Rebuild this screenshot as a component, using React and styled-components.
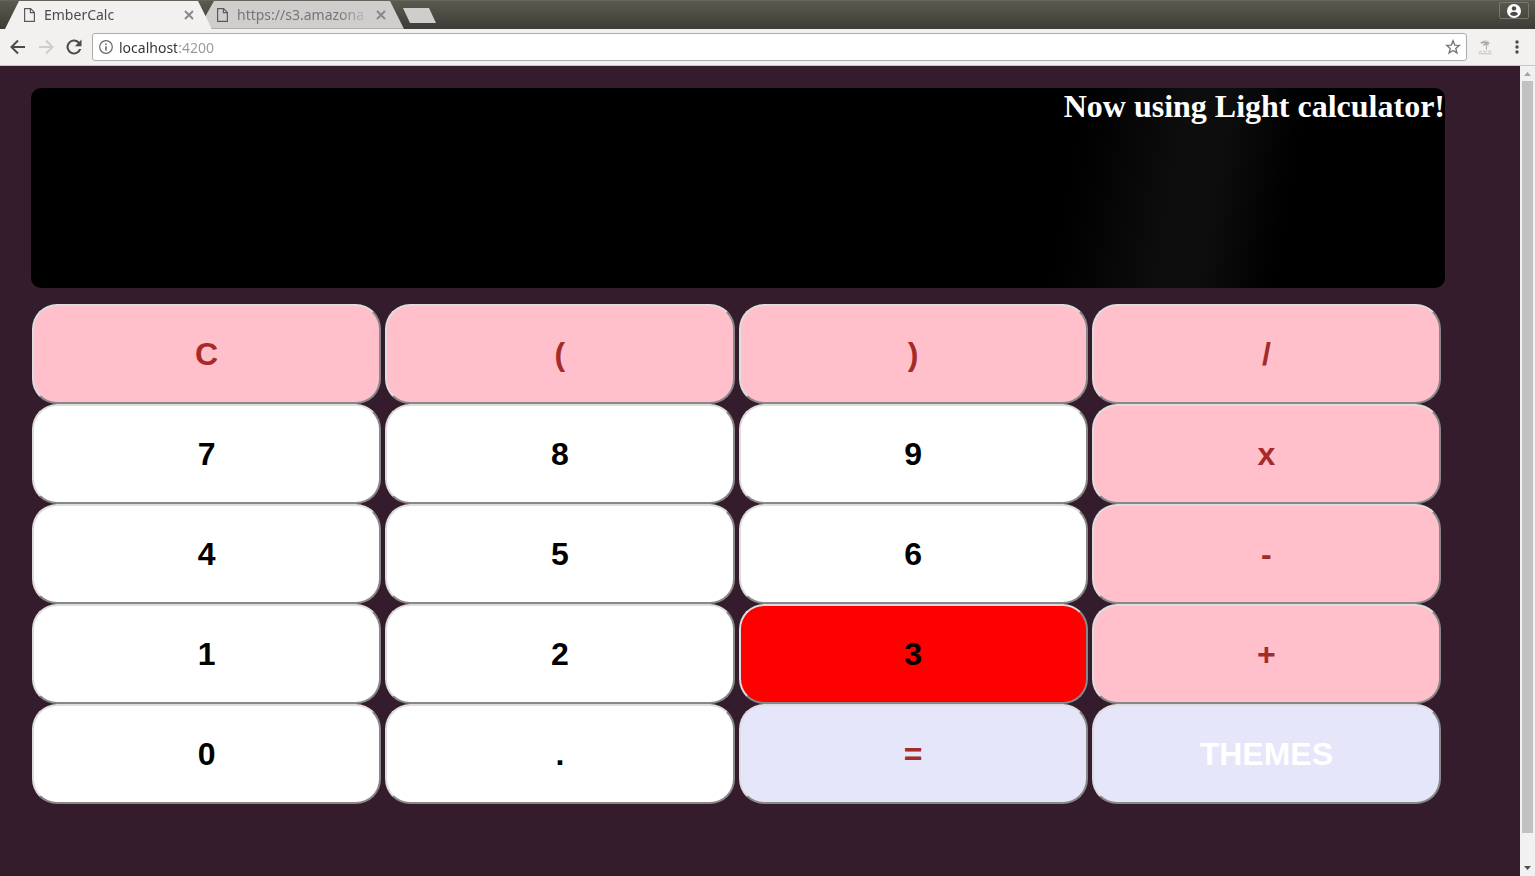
import React from "react";
import styled, { createGlobalStyle } from "styled-components";

const GlobalStyle = createGlobalStyle`
  * { box-sizing: border-box; }
  body { margin: 0; background: #341c2c; }
`;

const Browser = styled.div`
  display: flex;
  flex-direction: column;
  min-height: 100vh;
  font-family: "Noto Sans", "Open Sans", sans-serif;
`;

const IconButton = styled.button`
  display: flex;
  align-items: center;
  justify-content: center;
  flex: none;
  width: ${(p) => p.$size}px;
  height: ${(p) => p.$size}px;
  padding: 0;
  border: 0;
  background: none;
  color: ${(p) => p.$color || "#4a4a4a"};
`;

/* Tab strip */
const TabStrip = styled.header`
  display: flex;
  align-items: flex-start;
  height: 29px;
  padding: 0 6px 0 5px;
  background: linear-gradient(#5c5a4f, #3c3b36);
  border-top: 1px solid #66645a;
`;

const Tabs = styled.nav`
  display: flex;
`;

const Tab = styled.div`
  position: relative;
  z-index: ${(p) => (p.$active ? 2 : 1)};
  display: flex;
  align-items: center;
  width: ${(p) => (p.$active ? 207 : 204)}px;
  height: 28px;
  margin-left: ${(p) => (p.$active ? 0 : -12)}px;
  padding: 0 13px 0 ${(p) => (p.$active ? 18 : 16)}px;
  background: ${(p) => (p.$active ? "#f2f1f0" : "linear-gradient(#d0cecd 27px, #b0aeac 27px)")};
  clip-path: polygon(14px 0, calc(100% - 14px) 0, 100% 100%, ${(p) => (p.$active ? "0 100%" : "12px 100%, 5px 16px")});
`;

const TabButton = styled.button`
  display: flex;
  align-items: center;
  flex: 1;
  min-width: 0;
  gap: 8px;
  padding: 0;
  border: 0;
  background: none;
  color: ${(p) => (p.$active ? "#4c4c4c" : "#777573")};
  font: 14px/20px "Noto Sans", "Open Sans", sans-serif;
  text-align: left;
`;

const TabTitle = styled.span`
  flex: 1;
  white-space: nowrap;
  mask-image: linear-gradient(to right, #000 calc(100% - 32px), transparent);
`;

const NewTab = styled.button`
  width: 33px;
  height: 15px;
  margin: 7px auto 0 -1px;
  padding: 0;
  border: 0;
  background: #d0cecd;
  clip-path: polygon(0 0, 26px 0, 100% 100%, 7px 100%);
`;

const ProfileButton = styled.button`
  display: flex;
  align-items: center;
  justify-content: center;
  width: 30px;
  height: 17px;
  margin-top: 1px;
  padding: 0;
  border: 1px solid #77766f;
  border-radius: 2px;
  background: none;
`;

/* Address bar */
const Toolbar = styled.div`
  display: flex;
  align-items: center;
  height: 37px;
  padding: 0 8px 0 4px;
  background: #f2f1f0;
  border-bottom: 1px solid #c8c6c4;
`;

const AddressBox = styled.div`
  display: flex;
  align-items: center;
  flex: 1;
  min-width: 0;
  height: 28px;
  margin: 0 8px 0 4px;
  padding: 0 3px 0 6px;
  background: #fff;
  border: 1px solid #aeacaa;
  border-radius: 3px;
`;

const AddressInput = styled.input`
  flex: 1;
  min-width: 0;
  height: 22px;
  margin-left: 6px;
  padding: 0;
  border: 0;
  outline: 0;
  font: 14px/20px "Noto Sans", "Open Sans", sans-serif;
  color: #333;
  -webkit-text-fill-color: transparent;
  background: linear-gradient(to right, #333 58px, #999 58px);
  background-clip: text;
`;

const ToolbarActions = styled.div`
  display: flex;
  gap: 12px;
`;

/* Page */
const Viewport = styled.div`
  display: flex;
  flex: 1;
`;

const Calculator = styled.main`
  flex: 1;
  min-width: 0;
  padding: 22px 75px 0 31px;
  background: #341c2c;
`;

const Display = styled.section`
  height: 200px;
  border-radius: 10px;
  background: linear-gradient(100deg, #000 73%, #0d0d0d 80%, #0d0d0d 83%, #000 88%);
  text-align: right;
`;

const Message = styled.h1`
  margin: 0;
  color: #fff;
  font: bold 32px/37px "Liberation Serif", serif;
`;

const Keypad = styled.section`
  display: grid;
  grid-template-columns: repeat(4, 1fr);
  column-gap: 4px;
  padding: 16px 4px 0 1px;
`;

const tones = {
  digit: ["#fff", "#000"],
  operator: ["#ffc0cb", "#a52a2a"],
  pressed: ["#f00", "#000"],
  equals: ["#e6e6fa", "#a52a2a"],
  themes: ["#e6e6fa", "#fff"],
};

const Key = styled.button`
  height: 100px;
  padding: 0;
  border: 2px solid;
  border-color: #ddd #888 #888 #ddd;
  border-radius: 25px;
  background: ${(p) => tones[p.$tone][0]};
  color: ${(p) => tones[p.$tone][1]};
  font: bold 32px/36px "Liberation Sans", sans-serif;
`;

const Scrollbar = styled.div`
  display: flex;
  flex-direction: column;
  width: 15px;
  background: #f1f1f1;
`;

const Track = styled.div`
  flex: 1;
  display: flex;
  flex-direction: column;
  padding: 0 2px;

  &::before { content: ""; flex: 752; background: #c1c1c1; }
  &::after { content: ""; flex: 28; }
`;

const PageIcon = () => (
  <svg width="13" height="16" viewBox="0 0 13 16" fill="none" stroke="#5a5a5a" strokeWidth="1.2">
    <path d="M1.6 1.6h6l3.8 3.8v9H1.6zM7.4 1.6v4h4" />
  </svg>
);

const CloseIcon = () => (
  <svg width="10" height="10" viewBox="0 0 10 10" stroke="currentColor" strokeWidth="1.9">
    <path d="M1 1l8 8M9 1l-8 8" />
  </svg>
);

const LineArrow = ({ d }) => (
  <svg width="20" height="20" viewBox="0 0 20 20" fill="none" stroke="currentColor" strokeWidth="2">
    <path d={d} />
  </svg>
);

const ReloadIcon = () => (
  <svg width="20" height="20" viewBox="0 0 24 24" fill="currentColor">
    <path d="M18.4 5.6A9 9 0 1 0 20.7 14.500H18A6.500 6.500 0 1 1 16.600 7.400L13 11h8V3z" />
  </svg>
);

const StarIcon = () => (
  <svg width="16" height="16" viewBox="0 0 16 16" fill="none" stroke="currentColor" strokeWidth="1.4">
    <path d="M8 1.8l1.7 4.300 4.600.3-3.500 3 1.100 4.500L8 11.500l-3.900 2.400 1.100-4.500-3.500-3 4.600-.3z" />
  </svg>
);

const InfoIcon = () => (
  <svg width="14" height="14" viewBox="0 0 14 14" fill="none" stroke="#666">
    <circle cx="7" cy="7" r="6.3" strokeWidth="1.2" />
    <path d="M7 6.200v4.300M7 3.400v1.500" strokeWidth="1.600" />
  </svg>
);

const ProfileIcon = () => (
  <svg width="14" height="14" viewBox="0 0 14 14">
    <circle cx="7" cy="7" r="7" fill="#fff" />
    <circle cx="7" cy="4.4" r="2.2" fill="#4b4a43" />
    <path d="M2.8 9.9Q4.2 7.8 7 7.8t4.2 2.1Q9.6 12 7 12T2.8 9.9z" fill="#4b4a43" />
  </svg>
);

const ExtensionIcon = () => (
  <svg width="16" height="16" viewBox="0 0 16 16" fill="none">
    <path d="M2.5 4.500Q5 .8 8.500 1.200t5 3.600l-2.500-.6-2 1.300-2.500-1.300z" fill="#cfcfcf" />
    <path d="M4 4l4-.8L12 4.500M6 6.500l3-2 2.500 2" stroke="#969696" />
    <path d="M8.500 4.500q1.500 3 .8 6" stroke="#b0b0b0" strokeWidth="1.300" />
    <path d="M1.500 13.500l2.500-1.500 1 1.500M6.500 11.500l1.500 2 2-2M11.500 13.500l1-2 2 2M2 14.800h12.500" stroke="#c4c4c4" />
  </svg>
);

const MenuIcon = () => (
  <svg width="20" height="20" viewBox="0 0 20 20" fill="currentColor">
    <circle cx="10" cy="5" r="1.7" />
    <circle cx="10" cy="10" r="1.7" />
    <circle cx="10" cy="15" r="1.7" />
  </svg>
);

const ScrollArrow = ({ d, color }) => (
  <svg width="15" height="15" viewBox="0 0 15 15" fill={color}><path d={d} /></svg>
);

const keys = [
  ["C", "operator"], ["(", "operator"], [")", "operator"], ["/", "operator"],
  ["7", "digit"], ["8", "digit"], ["9", "digit"], ["x", "operator"],
  ["4", "digit"], ["5", "digit"], ["6", "digit"], ["-", "operator"],
  ["1", "digit"], ["2", "digit"], ["3", "pressed"], ["+", "operator"],
  ["0", "digit"], [".", "digit"], ["=", "equals"], ["THEMES", "themes"],
];

const tabs = [
  { title: "EmberCalc", active: true },
  { title: "https://s3.amazona", active: false },
];

export default function App() {
  return (
    <Browser>
      <GlobalStyle />
      <TabStrip>
        <Tabs aria-label="Tabs">
          {tabs.map(({ title, active }) => (
            <Tab key={title} $active={active}>
              <TabButton $active={active}>
                <PageIcon />
                <TabTitle>{title}</TabTitle>
              </TabButton>
              <IconButton $size={20} $color="#8a8886" aria-label={`Close ${title}`}><CloseIcon /></IconButton>
            </Tab>
          ))}
        </Tabs>
        <NewTab aria-label="New tab" />
        <ProfileButton aria-label="Profile"><ProfileIcon /></ProfileButton>
      </TabStrip>
      <Toolbar>
        <IconButton $size={28} aria-label="Back">
          <LineArrow d="M17 10H4M10 3.500L3.500 10l6.500 6.500" />
        </IconButton>
        <IconButton $size={28} $color="#cfcdcb" aria-label="Forward">
          <LineArrow d="M3 10h13M10 3.500l6.500 6.500-6.500 6.500" />
        </IconButton>
        <IconButton $size={28} aria-label="Reload"><ReloadIcon /></IconButton>
        <AddressBox>
          <InfoIcon />
          <AddressInput aria-label="Address" defaultValue="localhost:4200" />
          <IconButton $size={20} $color="#777" aria-label="Bookmark this page"><StarIcon /></IconButton>
        </AddressBox>
        <ToolbarActions>
          <IconButton $size={20} aria-label="Extension"><ExtensionIcon /></IconButton>
          <IconButton $size={20} aria-label="Menu"><MenuIcon /></IconButton>
        </ToolbarActions>
      </Toolbar>
      <Viewport>
        <Calculator>
          <Display><Message>Now using Light calculator!</Message></Display>
          <Keypad>
            {keys.map(([label, tone]) => <Key key={label} $tone={tone}>{label}</Key>)}
          </Keypad>
        </Calculator>
        <Scrollbar aria-hidden="true">
          <ScrollArrow color="#a3a3a3" d="M4 10h7L7.500 6z" />
          <Track />
          <ScrollArrow color="#505050" d="M4 5h7L7.500 9z" />
        </Scrollbar>
      </Viewport>
    </Browser>
  );
}
